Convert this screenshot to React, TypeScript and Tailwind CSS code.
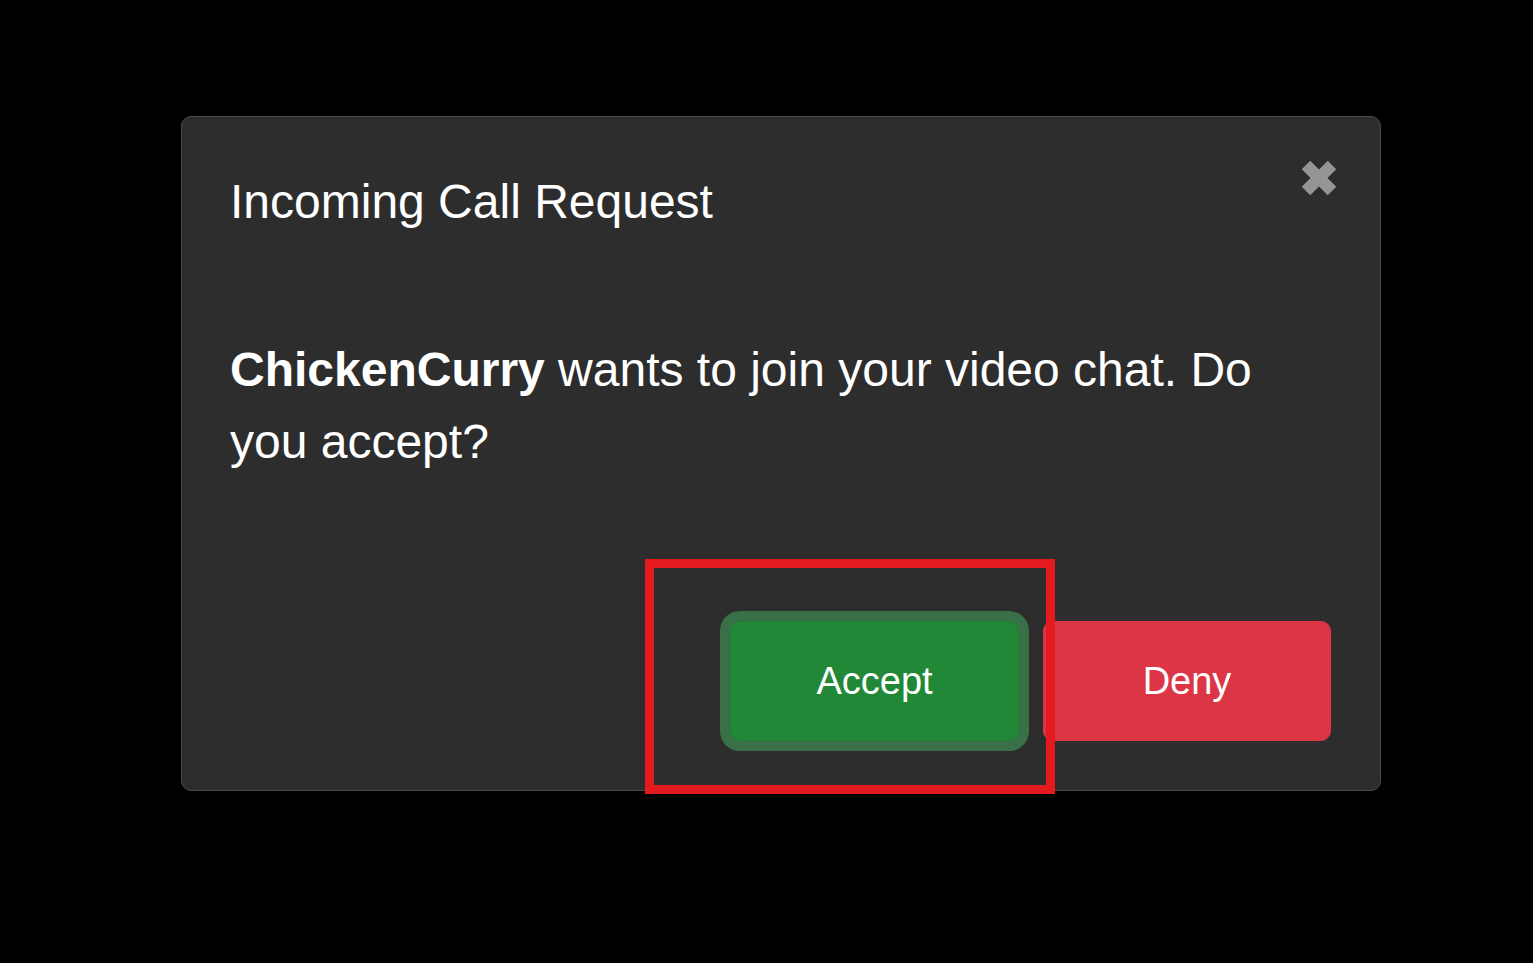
function CloseIcon() {
  return (
    <svg width="40" height="40" viewBox="0 0 40 40" aria-hidden="true">
      <path
        d="M7 7 L33 33 M33 7 L7 33"
        stroke="#959595"
        strokeWidth="12"
        strokeLinecap="butt"
        fill="none"
      />
    </svg>
  );
}

export default function App() {
  return (
    <div className="relative min-h-screen w-full bg-black pt-[116px] pl-[181px] font-['Liberation_Sans',Arial,sans-serif]">
      <div className="flex h-[675px] w-[1200px] flex-col rounded-[10px] border border-[#4a4a4a] bg-[#2d2d2d] pt-[56px] pl-[48px] pr-[49px] pb-[49px]">
        <div className="flex items-start justify-between">
          <h1 className="text-[48px] leading-[58px] text-white">Incoming Call Request</h1>
          <button className="-mt-[15px] -mr-[8px]" aria-label="Close">
            <CloseIcon />
          </button>
        </div>

        <p className="mt-[103px] text-[48px] leading-[72px] text-white">
          <strong className="font-bold">ChickenCurry</strong> wants to join your video chat. Do you accept?
        </p>

        <div className="mt-auto flex justify-end gap-[24px]">
          <button className="h-[120px] w-[289px] rounded-[10px] border border-[#1e7e34] bg-[#218838] text-[38px] text-white shadow-[0_0_0_10px_rgba(72,180,97,0.5)]">
            Accept
          </button>
          <button className="h-[120px] w-[288px] rounded-[10px] border border-[#dc3545] bg-[#dc3545] text-[38px] text-white">
            Deny
          </button>
        </div>
      </div>

      <div className="pointer-events-none absolute left-[645px] top-[559px] h-[235px] w-[410px] border-[9px] border-[#e31b1f]" />
    </div>
  );
}
